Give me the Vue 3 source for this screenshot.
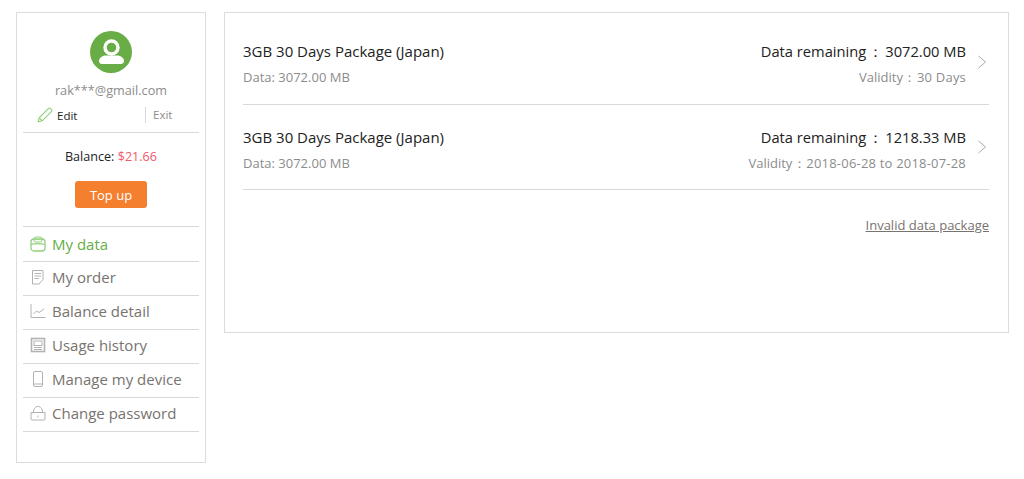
<script setup>
const menu = [
	{ label: "My data", icon: "data", active: true },
	{ label: "My order", icon: "order" },
	{ label: "Balance detail", icon: "chart" },
	{ label: "Usage history", icon: "usage" },
	{ label: "Manage my device", icon: "device" },
	{ label: "Change password", icon: "lock" },
];

const packages = [
	{ name: "3GB 30 Days Package (Japan)", data: "3072.00 MB", remaining: "3072.00 MB", validity: "30 Days" },
	{ name: "3GB 30 Days Package (Japan)", data: "3072.00 MB", remaining: "1218.33 MB", validity: "2018-06-28 to 2018-07-28" },
];
</script>

<template>
	<div class="page">
		<aside class="sidebar">
			<section class="profile">
				<svg class="avatar" viewBox="0 0 42 42" width="42" height="42">
					<circle cx="21" cy="21" r="21" fill="#68ad46" />
					<circle cx="21.500" cy="16.500" r="6.500" fill="none" stroke="#fff" stroke-width="3.400" />
					<path d="M9 30c0-3 3-5.500 7-5.500h11c4 0 7 2.500 7 5.500 0 2-1.500 3-3 3H12c-1.500 0-3-1-3-3z" fill="#fff" />
				</svg>
				<p class="email">rak***@gmail.com</p>
				<div class="actions">
					<a class="edit">
						<svg viewBox="0 0 16 16" width="16" height="16" fill="none" stroke="#8fcf75" stroke-width="1.100">
							<path d="M1.200 14.800l1-4L11.600 1.400c.5-.5 1.100-.5 1.600 0l1.400 1.400c.5.5.5 1.100 0 1.600L5.200 13.800z" />
							<path d="M2.200 10.800l3 3" />
						</svg>
						Edit
					</a>
					<a class="exit">Exit</a>
				</div>
			</section>
			<section class="balance">
				<p>Balance: <span>$21.66</span></p>
				<button type="button">Top up</button>
			</section>
			<nav class="menu">
				<a v-for="item in menu" :key="item.label" class="menu__item" :class="{ 'menu__item--active': item.active }">
					<svg viewBox="0 0 16 16" width="16" height="16" fill="none" stroke="currentColor" stroke-width="1">
						<template v-if="item.icon === 'data'">
							<rect x="1" y="3" width="14" height="12" rx="3" stroke-width="1.300" />
							<path d="M1 8.500c3-1.200 11-1.200 14 0" stroke-width="1.200" />
							<rect x="4" y="1" width="8" height="5" rx="2" />
							<path d="M6 3.500h1M9 3.500h1" />
						</template>
						<template v-else-if="item.icon === 'order'">
							<path d="M2.500 1.500h10.500v9l-4 4.500h-6.500z" />
							<path d="M4.500 4.500h6.500M4.500 7h6.500M4.500 9.500h4.500" />
						</template>
						<template v-else-if="item.icon === 'chart'">
							<path d="M1 1V14.500H15.500" />
							<path d="M3.500 11l3-3 2.500 1.500L14 6" />
						</template>
						<template v-else-if="item.icon === 'usage'">
							<rect x="1.500" y="1.500" width="13" height="13" stroke-width="1.600" />
							<rect x="4" y="4" width="8" height="4.500" />
							<path d="M4 10.500h8M4 12.500h8" />
						</template>
						<template v-else-if="item.icon === 'device'">
							<rect x="3.500" y="0.500" width="9" height="15" rx="1.500" />
							<path d="M3.500 13h9" />
						</template>
						<template v-else>
							<path d="M1 7.500h14v6.500c0 .6-.4 1-1 1H2c-.6 0-1-.4-1-1z" />
							<path d="M3.500 7.500C3.500 3.500 5.500 1.500 8 1.500s4.500 2 4.500 6" />
							<path d="M8 10.500v2" />
						</template>
					</svg>
					<span>{{ item.label }}</span>
				</a>
			</nav>
		</aside>
		<main class="content">
			<article v-for="(pack, i) in packages" :key="i" class="package">
				<div class="package__info">
					<h2>{{ pack.name }}</h2>
					<p>Data: {{ pack.data }}</p>
				</div>
				<div class="package__status">
					<h3>Data remaining<span class="package__colon">：</span>{{ pack.remaining }}</h3>
					<p>Validity<span class="package__colon package__colon--small">：</span><span class="package__value">{{ pack.validity }}</span></p>
				</div>
				<svg class="chevron" viewBox="0 0 10 16" width="10" height="16" fill="none" stroke="#aaa" stroke-width="1">
					<path d="M1.500 2L8.500 8l-7 6" />
				</svg>
			</article>
			<div class="invalid"><a>Invalid data package</a></div>
		</main>
	</div>
</template>

<style>
body {
	background: #fff;
}
</style>

<style scoped>
.page {
	display: flex;
	align-items: flex-start;
	gap: 18px;
	padding: 12px 15px 0 16px;
	font-family: "Open Sans", "Noto Sans", sans-serif;
	color: #222;
}

p,
h2,
h3 {
	margin: 0;
	font-weight: 400;
}

/* Left column */
.sidebar {
	box-sizing: border-box;
	width: 190px;
	height: 451px;
	padding: 0 6px;
	border: 1px solid #dcdcdc;
	flex-shrink: 0;
}

.profile {
	display: flex;
	flex-direction: column;
	align-items: center;
	padding-top: 18px;
	height: 120px;
	box-sizing: border-box;
	border-bottom: 1px solid #d9d9d9;
}

.email {
	margin-top: 8px;
	font-size: 12.7px;
	line-height: 18px;
	color: #8c8c8c;
}

.actions {
	display: flex;
	align-items: center;
	align-self: stretch;
	margin-top: 7px;
	padding-left: 14px;
	font-size: 11.5px;
	height: 18px;
}

.edit {
	display: flex;
	align-items: center;
	gap: 4px;
	width: 108px;
}

.exit {
	padding-left: 7px;
	border-left: 1px solid #d9d9d9;
	color: #8c8c8c;
	line-height: 16px;
}

.balance {
	display: flex;
	flex-direction: column;
	align-items: center;
	box-sizing: border-box;
	height: 94px;
	padding-top: 15px;
	font-size: 12.6px;
	line-height: 18px;
	border-bottom: 1px solid #d9d9d9;
}

.balance span {
	color: #f4566a;
}

.balance button {
	margin-top: 15px;
	width: 72px;
	height: 27px;
	padding: 0;
	border: 0;
	border-radius: 3px;
	background: #f47f2f;
	color: #fff;
	font: inherit;
	font-size: 13px;
}

.menu__item {
	display: flex;
	align-items: center;
	gap: 6px;
	box-sizing: border-box;
	height: 34px;
	padding-left: 7px;
	padding-bottom: 4px;
	border-bottom: 1px solid #d9d9d9;
	font-size: 15px;
	color: #77736f;
}

.menu__item:first-child {
	height: 35px;
	padding-bottom: 1px;
}

.menu__item svg {
	color: #b2b2b2;
	flex-shrink: 0;
}

.menu__item--active {
	color: #68ad46;
}

.menu__item--active svg {
	color: #93d07a;
}

/* Right column */
.content {
	box-sizing: border-box;
	width: 785px;
	height: 321px;
	padding: 6px 19px 0 18px;
	border: 1px solid #dcdcdc;
}

.package {
	display: flex;
	align-items: center;
	box-sizing: border-box;
	height: 85px;
	border-bottom: 1px solid #d9d9d9;
}

.package:first-child {
	height: 86px;
}

.package__info,
.package__status {
	padding-top: 4px;
}

.package__info {
	flex: 1;
}

.package h2 {
	font-size: 15px;
	line-height: 20px;
	color: #222;
}

.package h3 {
	font-size: 14.7px;
	line-height: 20px;
	color: #222;
}

.package p {
	margin-top: 7px;
	font-size: 13px;
	line-height: 18px;
	color: #8c8c8c;
}

.package__status {
	text-align: right;
}

.package__colon {
	display: inline-block;
	width: 19px;
	text-align: center;
}

.package__colon--small {
	width: 14px;
}

.package__value {
	letter-spacing: 0.2px;
}

.chevron {
	margin: 0 2px 0 11px;
}

.invalid {
	margin-top: 26px;
	text-align: right;
	font-size: 13px;
	line-height: 18px;
	color: #77736f;
}

.invalid a {
	text-decoration: underline;
}
</style>
